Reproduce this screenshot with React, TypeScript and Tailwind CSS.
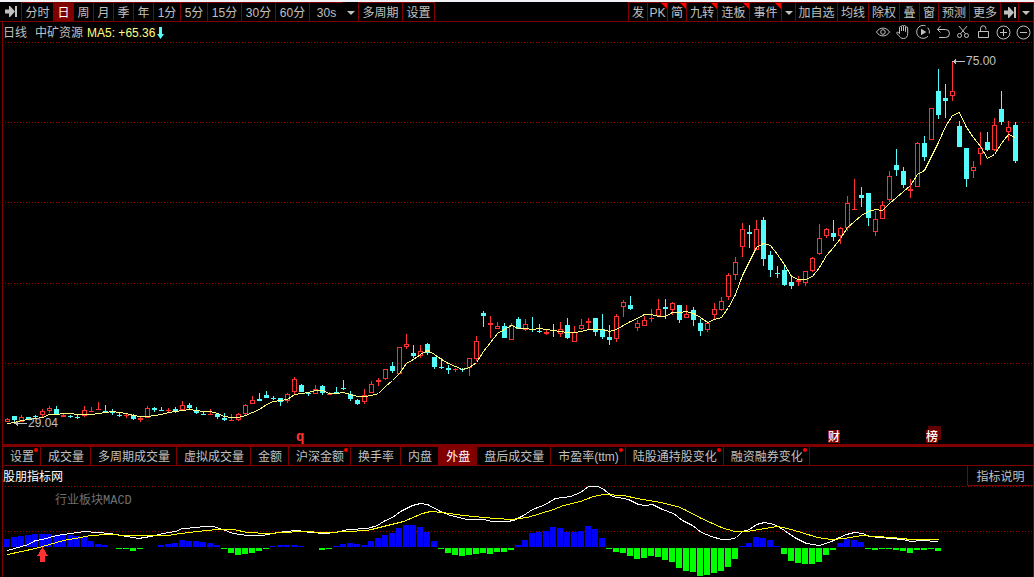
import type { ReactNode } from "react";
import clsx from "clsx";

// [direction, high, body top, body bottom, low]
type Candle = ["r" | "c", number, number, number, number];

const STEP = 7;
const FIRST_X = 7;

const candles: Candle[] = [
  ["r", 418, 419, 422, 422], ["c", 416, 416, 420, 422], ["r", 415, 417, 422, 422], ["c", 417, 417, 419, 419],
  ["c", 415, 416, 417, 418], ["r", 409, 411, 415, 417], ["r", 406, 408, 411, 413], ["c", 406, 409, 414, 414],
  ["r", 414, 415, 417, 417], ["c", 415, 416, 417, 418], ["c", 415, 417, 418, 419], ["r", 406, 410, 416, 417],
  ["r", 407, 411, 412, 412], ["r", 402, 409, 410, 410], ["c", 405, 411, 412, 412], ["c", 409, 411, 413, 415],
  ["c", 413, 415, 416, 417], ["r", 414, 415, 416, 418], ["c", 414, 415, 419, 420], ["r", 417, 418, 420, 422],
  ["r", 406, 408, 418, 418], ["c", 407, 408, 410, 412], ["c", 407, 410, 411, 411], ["r", 408, 410, 411, 412],
  ["c", 407, 409, 412, 413], ["r", 401, 405, 410, 411], ["c", 403, 405, 408, 409], ["c", 407, 410, 413, 414],
  ["c", 411, 414, 415, 415], ["r", 409, 414, 415, 415], ["c", 413, 414, 417, 419], ["c", 413, 418, 420, 421],
  ["r", 414, 420, 421, 421], ["r", 413, 414, 420, 421], ["r", 404, 405, 414, 415], ["r", 396, 400, 404, 404],
  ["c", 393, 399, 401, 401], ["c", 391, 395, 398, 398], ["c", 396, 398, 399, 400], ["c", 398, 398, 402, 406],
  ["r", 393, 394, 401, 403], ["r", 377, 379, 392, 395], ["c", 384, 385, 392, 392], ["c", 392, 393, 394, 396],
  ["r", 385, 389, 394, 394], ["c", 385, 386, 393, 395], ["r", 392, 394, 395, 395], ["c", 387, 392, 393, 394],
  ["c", 380, 388, 389, 390], ["c", 391, 394, 399, 401], ["c", 399, 400, 404, 405], ["r", 389, 395, 402, 404],
  ["r", 381, 384, 393, 393], ["r", 378, 380, 382, 386], ["r", 369, 369, 379, 380], ["c", 362, 366, 371, 373],
  ["r", 347, 347, 374, 374], ["r", 334, 344, 347, 349], ["c", 345, 353, 356, 358], ["r", 345, 351, 356, 358],
  ["c", 343, 344, 353, 355], ["c", 357, 357, 367, 369], ["c", 358, 367, 368, 369], ["c", 365, 368, 370, 374],
  ["r", 368, 369, 370, 372], ["c", 368, 369, 370, 372], ["r", 358, 358, 368, 376], ["r", 336, 341, 359, 361],
  ["c", 311, 313, 316, 327], ["r", 316, 323, 325, 338], ["r", 322, 326, 329, 329], ["c", 323, 326, 338, 338],
  ["r", 323, 325, 340, 340], ["c", 317, 319, 329, 329], ["r", 319, 324, 330, 331], ["c", 317, 329, 330, 332],
  ["c", 324, 331, 332, 333], ["r", 330, 332, 334, 335], ["c", 324, 330, 331, 337], ["r", 322, 329, 334, 337],
  ["c", 318, 325, 338, 339], ["r", 326, 332, 342, 342], ["r", 319, 325, 329, 330], ["r", 318, 321, 323, 330],
  ["c", 318, 318, 332, 336], ["c", 314, 329, 337, 339], ["c", 325, 337, 340, 345], ["r", 314, 316, 339, 342],
  ["r", 300, 302, 307, 317], ["c", 296, 305, 309, 310], ["r", 320, 323, 328, 331], ["r", 316, 320, 326, 326],
  ["r", 309, 318, 319, 322], ["r", 299, 309, 316, 316], ["c", 299, 307, 309, 319], ["r", 302, 303, 310, 315],
  ["c", 305, 305, 320, 323], ["r", 305, 314, 318, 318], ["c", 307, 310, 320, 326], ["c", 319, 323, 331, 336],
  ["r", 321, 323, 330, 332], ["r", 303, 309, 315, 320], ["r", 297, 301, 310, 311], ["r", 273, 275, 297, 300],
  ["r", 257, 262, 275, 280], ["r", 223, 229, 247, 257], ["c", 225, 232, 234, 248], ["r", 220, 229, 250, 250],
  ["c", 217, 220, 259, 266], ["c", 251, 255, 270, 277], ["c", 266, 273, 274, 278], ["c", 265, 270, 285, 286],
  ["c", 275, 282, 286, 289], ["r", 276, 280, 282, 286], ["r", 271, 271, 283, 286], ["r", 257, 258, 271, 272],
  ["r", 224, 238, 254, 255], ["r", 228, 229, 236, 238], ["c", 220, 233, 237, 241], ["r", 227, 228, 236, 244],
  ["r", 196, 203, 228, 231], ["r", 179, 209, 210, 210], ["c", 187, 195, 198, 207], ["c", 193, 193, 218, 226],
  ["r", 211, 219, 232, 236], ["r", 201, 205, 219, 219], ["r", 171, 176, 200, 202], ["c", 149, 165, 170, 176],
  ["c", 167, 171, 185, 188], ["r", 179, 189, 191, 198], ["r", 142, 143, 187, 187], ["c", 136, 143, 157, 161],
  ["r", 108, 108, 140, 140], ["c", 69, 91, 115, 119], ["c", 84, 98, 101, 118], ["r", 61, 91, 96, 101],
  ["c", 121, 126, 147, 147], ["c", 148, 148, 179, 187], ["r", 161, 167, 171, 178], ["r", 132, 148, 154, 165],
  ["c", 132, 142, 150, 151], ["r", 118, 125, 150, 151], ["c", 91, 109, 122, 125], ["r", 121, 127, 132, 141],
  ["c", 122, 125, 161, 163],
];

const ma5 = [
  423, 422, 420, 419, 418, 417, 414, 414, 413, 413, 414, 414, 414, 413, 412, 411, 412, 413, 415, 416,
  416, 415, 414, 412, 411, 410, 409, 410, 411, 411, 413, 416, 417, 417, 415, 412, 409, 404, 401, 400,
  399, 394, 393, 392, 390, 390, 393, 393, 392, 394, 396, 396, 395, 393, 386, 380, 373, 363, 359, 354,
  350, 354, 359, 363, 366, 369, 367, 362, 351, 342, 333, 329, 325, 328, 328, 329, 328, 329, 330, 331,
  332, 332, 331, 329, 329, 329, 331, 329, 325, 321, 318, 314, 314, 316, 316, 312, 312, 311, 313, 317,
  322, 319, 317, 307, 294, 275, 261, 247, 243, 245, 254, 264, 276, 279, 279, 276, 267, 255, 247, 238,
  227, 221, 215, 211, 209, 210, 203, 197, 191, 185, 174, 170, 156, 142, 126, 115, 112, 127, 137, 146,
  158, 154, 143, 134, 137,
];

const macd = [
  8, 10, 11, 12, 13, 13, 13, 12, 12, 12, 11, 10, 6, 3, 2, 0, -1, -1, -3, -1, 0, 0, 2, 3, 4, 7, 6, 6, 5, 4, 2,
  -1, -5, -7, -6, -5, -3, -1, 1, 2, 2, 2, 1, 0, 0, -2, -1, 1, 3, 4, 3, 2, 6, 9, 12, 14, 19, 22, 22, 20, 15, 6,
  -1, -5, -7, -8, -7, -6, -5, -6, -4, -4, -2, 2, 7, 14, 15, 16, 20, 19, 15, 15, 16, 21, 18, 9,
  -1, -4, -5, -8, -11, -10, -8, -9, -12, -14, -20, -23, -24, -28, -27, -25, -23, -19, -11, 1, 4, 10, 9, 7, 1,
  -6, -13, -15, -16, -16, -14, -7, -2, 4, 8, 7, 5, -1, -2, -1, -1, -2, -3, -5, -2, -2, -1, -3,
];

const dif =
  "7,550 21,546 28,544 35,540 42,539 56,535 70,533 84,531 97,532 110,533 126,536 138,538 150,536 163,533 175,531 182,528 197,527 203,526 213,526 222,529 233,533 247,535 262,535 272,533 285,531 297,530 310,532 325,533 335,532 348,529 367,528 377,525 383,521 392,517 400,511 412,505 420,503 427,504 440,511 450,515 467,519 483,519 492,521 507,521 513,520 523,515 532,509 543,505 555,498 570,496 580,492 588,486 597,486 602,488 612,496 628,499 638,504 645,505 652,504 662,509 673,513 682,520 692,525 701,532 711,536 721,539 729,539 736,537 742,531 749,529 756,524 764,522 774,524 784,530 794,537 806,543 819,545 831,541 839,537 846,534 854,532 862,533 869,536 891,538 902,539 911,541 921,540 938,541";

const dea =
  "7,554 21,551 35,548 49,544 63,540 80,537 90,535 107,534 127,535 143,535 167,535 180,533 197,531 217,529 233,529 247,532 267,533 283,532 300,531 327,532 347,531 367,530 383,526 403,521 422,513 430,511 442,512 463,515 483,517 510,519 527,517 553,509 563,505 580,501 593,496 603,494 623,495 637,498 660,502 677,506 684,509 701,518 721,527 734,531 747,531 764,528 777,526 787,528 801,532 817,537 831,539 844,538 861,535 891,537 911,539 938,539";

const periods = [
  { name: "分时", width: "w-8" },
  { name: "日", width: "w-5" },
  { name: "周", width: "w-5" },
  { name: "月", width: "w-5" },
  { name: "季", width: "w-5" },
  { name: "年", width: "w-5" },
  { name: "1分", width: "w-[27px]" },
  { name: "5分", width: "w-[27px]" },
  { name: "15分", width: "w-[34px]" },
  { name: "30分", width: "w-[34px]" },
  { name: "60分", width: "w-[34px]" },
  { name: "30s", width: "w-[34px]" },
];

const features = [
  { name: "发", width: "w-[19px]" },
  { name: "PK", width: "w-5", hot: true },
  { name: "简", width: "w-[19px]", hot: true },
  { name: "九转", width: "w-[31px]", hot: true },
  { name: "连板", width: "w-8", hot: true },
  { name: "事件", width: "w-8", hot: true },
];

const actions = [
  { name: "加自选", width: "w-[42px]" },
  { name: "均线", width: "w-[31px]" },
  { name: "除权", width: "w-[31px]" },
  { name: "叠", width: "w-5" },
  { name: "窗", width: "w-[19px]" },
  { name: "预测", width: "w-[31px]" },
  { name: "更多", width: "w-[31px]" },
];

const indicators = [
  { name: "设置", dot: true },
  { name: "成交量" },
  { name: "多周期成交量" },
  { name: "虚拟成交量" },
  { name: "金额" },
  { name: "沪深金额", dot: true },
  { name: "换手率" },
  { name: "内盘" },
  { name: "外盘" },
  { name: "盘后成交量" },
  { name: "市盈率(ttm)", dot: true },
  { name: "陆股通持股变化", dot: true },
  { name: "融资融券变化", dot: true },
];

const Cell = ({ width, active, hot, label, plain, children }: {
  width: string;
  active?: boolean;
  hot?: boolean;
  label?: string;
  plain?: boolean;
  children: ReactNode;
}) => (
  <button
    type="button"
    aria-label={label}
    className={clsx(
      "relative flex h-full shrink-0 items-center justify-center pt-0.5 whitespace-nowrap",
      !plain && "border-t border-l border-[#800000]",
      active && "bg-[#800000] text-white",
      width
    )}
  >
    {children}
    {hot && (
      <svg className="absolute top-0 right-0 size-1.5" viewBox="0 0 6 6" aria-hidden="true">
        <path d="M0 0h6v6z" fill="#ff0000" />
      </svg>
    )}
  </button>
);

const Caret = () => (
  <svg width="8" height="4" viewBox="0 0 8 4" aria-hidden="true">
    <path d="M0 0h8L4 4z" fill="currentColor" />
  </svg>
);

const JumpIcon = () => (
  <svg className="mb-0.5 shrink-0" width="12" height="11" viewBox="0 0 12 11" fill="currentColor" aria-hidden="true">
    <path d="M0 3.500h4V0h1l5 5.500L5 11H4V7.500H0zM10 0h2v11h-2z" />
  </svg>
);

const tools: { label: string; icon: ReactNode }[] = [
  {
    label: "显示",
    icon: (
      <>
        <path d="M1.5 8C4.5 2.8 11.500 2.8 14.500 8C11.500 13.200 4.500 13.200 1.500 8z" />
        <circle cx="8" cy="8" r="2.300" />
      </>
    ),
  },
  {
    label: "平移",
    icon: (
      <path d="M4.500 9V3.500a1 1 0 0 1 2 0V7M6.500 7V2.500a1 1 0 0 1 2 0V7M8.500 7V2.500a1 1 0 0 1 2 0V7.500M10.500 7.500V4a1 1 0 0 1 2.200 0V9.500c0 3-1.500 5-4.200 5c-2.500 0-3.500-1.200-4.800-3L1.800 9.300c-.4-1 .6-1.600 1.400-1L4.800 10" />
    ),
  },
  {
    label: "回放",
    icon: (
      <>
        <path d="M10.500 1.800A6.500 6.500 0 1 0 13 12.200M14.300 9.500A6.500 6.500 0 0 0 12.800 3.600" />
        <path d="M6 4.800V11.200L11.300 8z" fill="currentColor" stroke="none" />
      </>
    ),
  },
  {
    label: "撤销",
    icon: <path d="M5.500 2L2.500 5.500l3 3M2.500 5.500H10.500a4 4 0 0 1 0 8H4" />,
  },
  {
    label: "剪切",
    icon: (
      <>
        <circle cx="4.500" cy="11.500" r="2" />
        <circle cx="11.500" cy="11.500" r="2" />
        <path d="M5.500 9.800L12 2M10.500 9.800L4 2" />
      </>
    ),
  },
  {
    label: "锁定",
    icon: <path d="M3.500 7.500H13.500V13.500H3.500zM5.500 7.500V4.500a2.700 2.700 0 0 1 5.400 0V5.500" />,
  },
  {
    label: "放大",
    icon: (
      <>
        <circle cx="8.500" cy="8.500" r="6.500" />
        <path d="M5 8.500h7M8.500 5v7" />
      </>
    ),
  },
  {
    label: "缩小",
    icon: (
      <>
        <circle cx="8.500" cy="8.500" r="6.500" />
        <path d="M5 8.500h7" />
      </>
    ),
  },
];

const GridLine = ({ y }: { y: number }) => (
  <path d={`M5 ${y + 0.5}H1033`} stroke="#a00000" strokeDasharray="1 2" />
);

const CandleShape = ({ data, x }: { data: Candle; x: number }) => {
  const [dir, high, top, bottom, low] = data;
  const h = bottom - top;
  if (dir === "c" || h <= 2) {
    return (
      <g fill={dir === "c" ? "#54fcfc" : "#ff3232"}>
        <rect x={x} y={high} width={1} height={low - high} />
        <rect x={x - 2} y={top} width={5} height={h} />
      </g>
    );
  }
  return (
    <g fill="#ff3232">
      <rect x={x} y={high} width={1} height={top - high} />
      <rect x={x} y={bottom} width={1} height={low - bottom} />
      <rect x={x - 1.5} y={top + 0.5} width={4} height={h - 1} fill="none" stroke="#ff3232" />
    </g>
  );
};

const PriceChart = () => (
  <svg viewBox="3 42 1030 402" className="block h-auto w-full" shapeRendering="crispEdges" role="img" aria-label="中矿资源 日线">
    {[42, 122, 202, 283, 363].map((y) => (
      <GridLine key={y} y={y} />
    ))}
    {candles.map((c, i) => (
      <CandleShape key={i} data={c} x={FIRST_X + i * STEP} />
    ))}
    <polyline
      points={ma5.map((y, i) => `${FIRST_X + i * STEP + 0.5},${y + 0.5}`).join(" ")}
      fill="none"
      stroke="#ffff80"
    />
    <g fill="#c0c0c0" className="text-xs">
      <path d="M14 423.500L18 421v2h9v1h-9v2z" />
      <text x="28" y="427">29.04</text>
      <path d="M952 61.500L956 59v2h9v1h-9v2z" />
      <text x="966" y="65">75.00</text>
    </g>
    <text x="296" y="441" fill="#ff3232" className="font-['Liberation_Mono'] text-sm font-bold">q</text>
    <rect x="828" y="430" width="12" height="13" fill="#800000" />
    <rect x="928" y="426" width="13" height="14" fill="#600000" />
    <rect x="926" y="430" width="12" height="13" fill="#800000" />
    <g fill="#ffffff" className="text-xs font-medium">
      <text x="828" y="441">财</text>
      <text x="926" y="441">榜</text>
    </g>
  </svg>
);

const MacdChart = () => (
  <svg viewBox="3 486 1030 91" className="block h-auto w-full" shapeRendering="crispEdges" role="img" aria-label="行业板块MACD">
    <GridLine y={486} />
    <GridLine y={531} />
    <text x="55" y="504" fill="#707070" className="font-['Liberation_Mono','Noto_Sans_CJK_SC',monospace] text-xs">
      行业板块MACD
    </text>
    {macd.map((v, i) => (
      <rect
        key={i}
        x={FIRST_X + i * STEP - 3}
        y={v > 0 ? 547 - v : 548}
        width={6}
        height={Math.abs(v)}
        fill={v > 0 ? "#0000ff" : "#00ff00"}
      />
    ))}
    <polyline points={dif} fill="none" stroke="#ffffff" transform="translate(0.5 0.5)" />
    <polyline points={dea} fill="none" stroke="#ffff00" transform="translate(0.5 0.5)" />
    <path d="M42.500 547L48 556H45V562H40V556H37z" fill="#ff3232" />
  </svg>
);

const App = () => {
  return (
    <main className="min-h-screen bg-black font-['Liberation_Sans','Noto_Sans_CJK_SC',sans-serif] text-xs text-[#c0c0c0]">
      <div className="h-0.5 bg-[#f0f2f5]" />

      <nav className="flex h-5 border-r border-b border-[#800000]" aria-label="工具栏">
        <Cell width="w-[21px]" label="前进" plain>
          <JumpIcon />
        </Cell>
        {periods.map((p) => (
          <Cell key={p.name} width={p.width} active={p.name === "日"}>
            {p.name}
          </Cell>
        ))}
        <Cell width="w-[15px]" label="更多周期" plain>
          <Caret />
        </Cell>
        <Cell width="w-11">多周期</Cell>
        <Cell width="w-8">设置</Cell>
        <div className="flex-1 border-l border-[#800000]" />
        {features.map((f) => (
          <Cell key={f.name} width={f.width} hot={f.hot}>
            {f.name}
          </Cell>
        ))}
        <Cell width="w-[14px]" label="更多功能">
          <Caret />
        </Cell>
        {actions.map((a) => (
          <Cell key={a.name} width={a.width}>
            {a.name}
          </Cell>
        ))}
        <Cell width="w-[18px]" label="跳到最后">
          <JumpIcon />
        </Cell>
        <Cell width="w-[15px]" label="更多操作">
          <Caret />
        </Cell>
      </nav>

      <div className="ml-0.5 border-x border-[#800000]">
        <section>
          <header className="flex h-5 items-center justify-between pr-0.5">
            <h1 className="flex items-center pt-0.5 whitespace-nowrap">
              <span>日线</span>
              <span className="ml-2">中矿资源</span>
              <span className="ml-1 text-[#ffff80]">MA5: +65.36</span>
              <svg className="ml-0.5" width="7" height="12" viewBox="0 0 7 12" fill="#54fcfc" aria-hidden="true">
                <path d="M2 0h3v7H7L3.500 12 0 7h2z" />
              </svg>
            </h1>
            <div className="flex gap-1">
              {tools.map((t) => (
                <button key={t.label} type="button" aria-label={t.label}>
                  <svg width="16" height="16" viewBox="0 0 16 16" fill="none" stroke="currentColor">
                    {t.icon}
                  </svg>
                </button>
              ))}
            </div>
          </header>
          <PriceChart />
        </section>

        <section>
          <nav className="flex h-[22px] border-t-3 border-b border-t-[#800000] border-b-[#800000]" aria-label="指标">
            {indicators.map((t) => (
              <button
                key={t.name}
                type="button"
                className={clsx(
                  "relative flex shrink-0 items-center border-r border-[#800000] pt-0.5 pr-1.5 pl-[7px] whitespace-nowrap",
                  t.name === "外盘" && "bg-[#800000] text-white"
                )}
              >
                {t.name}
                {t.dot && <span className="absolute top-px right-0.5 size-1 rounded-full bg-[#ff0000]" />}
              </button>
            ))}
          </nav>
          <div className="flex h-5 items-center justify-between">
            <h2 className="pt-0.5 whitespace-nowrap text-white">股朋指标网</h2>
            <button type="button" className="flex h-full w-[66px] items-center justify-center border-b border-l border-[#800000] pt-0.5">
              指标说明
            </button>
          </div>
          <MacdChart />
        </section>
      </div>
    </main>
  );
};

export default App;
